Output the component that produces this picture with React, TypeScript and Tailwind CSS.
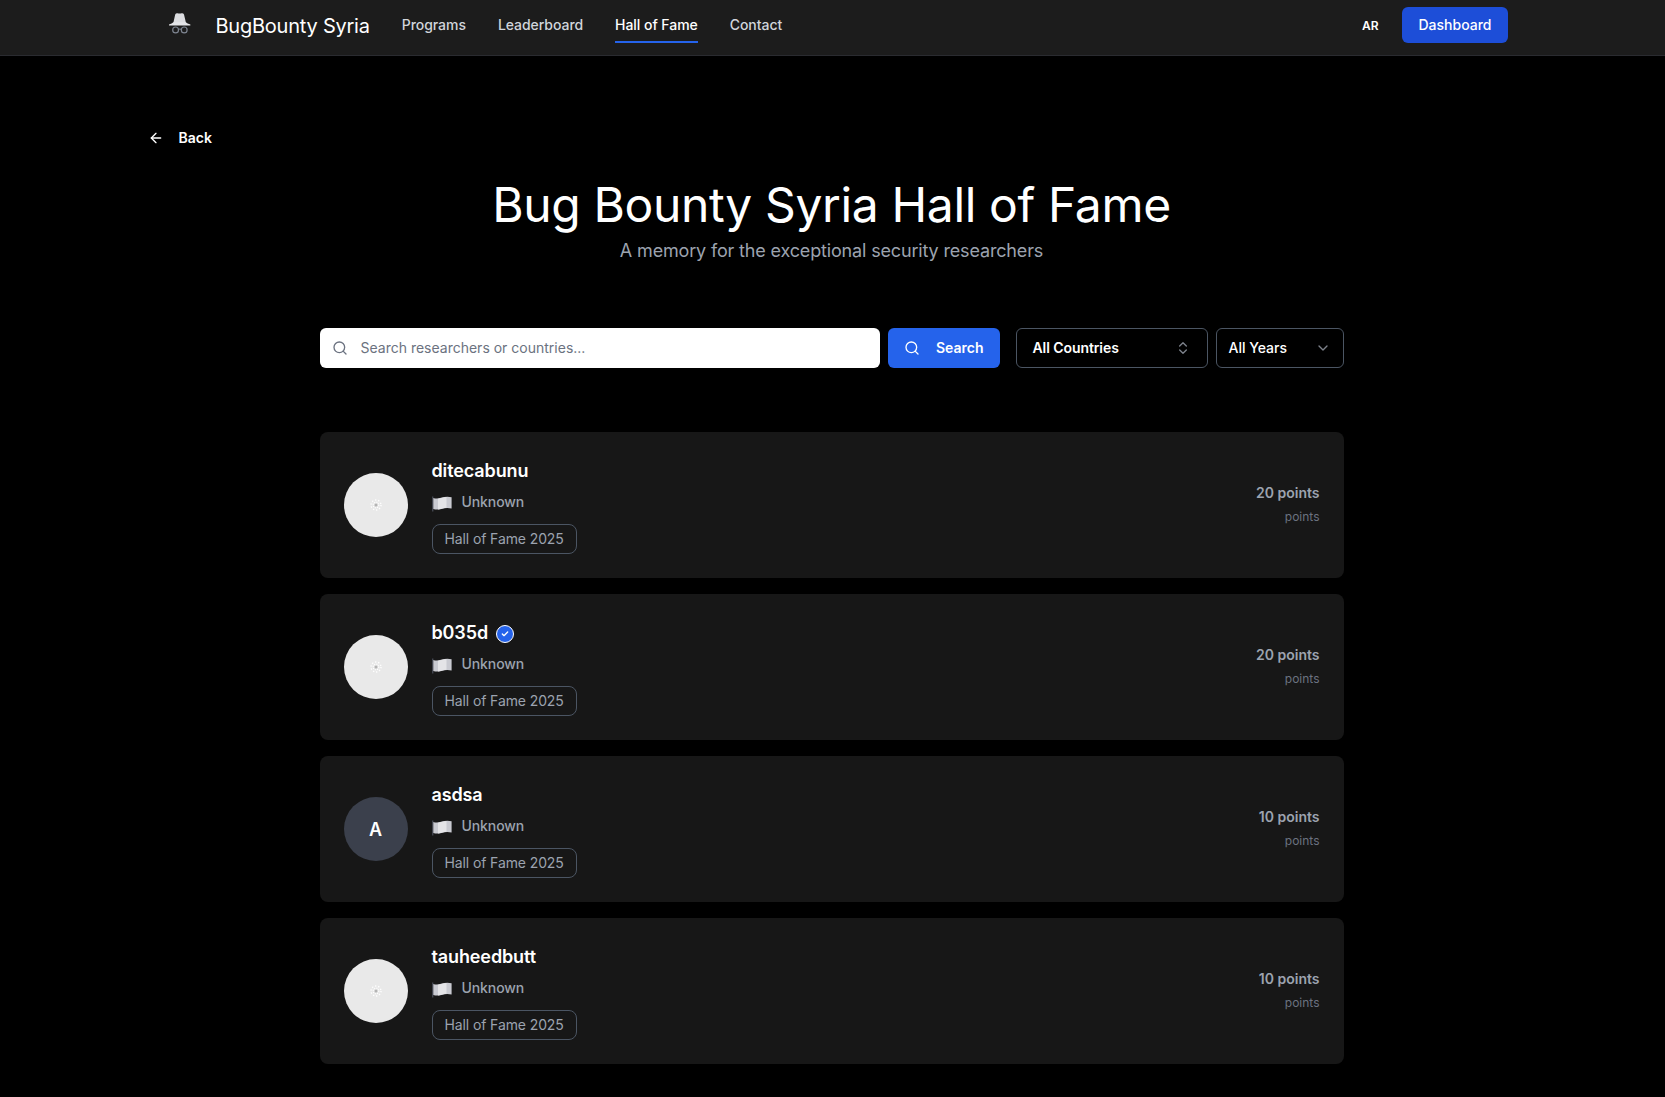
import React from 'react';
import { ArrowLeft, Check, ChevronDown, ChevronsUpDown, Search } from 'lucide-react';

interface Researcher {
  name: string;
  country: string;
  points: number;
  badge: string;
  verified?: boolean;
  initial?: string;
}

const NAV_ITEMS = ['Programs', 'Leaderboard', 'Hall of Fame', 'Contact'];

const RESEARCHERS: Researcher[] = [
  { name: 'ditecabunu', country: 'Unknown', points: 20, badge: 'Hall of Fame 2025' },
  { name: 'b035d', country: 'Unknown', points: 20, badge: 'Hall of Fame 2025', verified: true },
  { name: 'asdsa', country: 'Unknown', points: 10, badge: 'Hall of Fame 2025', initial: 'A' },
  { name: 'tauheedbutt', country: 'Unknown', points: 10, badge: 'Hall of Fame 2025' },
];

const Logo = () => (
  <svg viewBox="0 0 48 48" className="w-12 h-12 -mt-0.5 shrink-0" fill="none">
    <path d="M17.3 23 L19.2 14.6 Q19.8 13 21.5 13.2 Q23.6 14 25.7 13.2 Q27.4 13 28 14.6 L30 23 Z" fill="#dcdde0" />
    <path d="M13 24.4 Q16 23.6 17.4 22.2 H29.8 Q31.2 23.6 34.4 24.4 Q34.8 25.6 33.4 25.6 H14 Q12.6 25.6 13 24.4 Z" fill="#e4e5e8" />
    <circle cx="19.6" cy="29.9" r="2.9" stroke="#7d8490" strokeWidth="1.2" />
    <circle cx="28.2" cy="29.9" r="2.9" stroke="#7d8490" strokeWidth="1.2" />
    <path d="M22.5 29.4 Q23.9 28.6 25.3 29.4" stroke="#7d8490" />
  </svg>
);

const WhiteFlag = () => (
  <svg viewBox="0 0 20 16" className="w-5 h-4 mt-1 shrink-0">
    <path d="M0.3 0.6 h1 v15 h-1 Z" fill="#565b68" />
    <path d="M1.3 2 Q5 3.2 9 1.8 Q14 0.2 19.6 1.2 V12.4 Q14 11.4 9.5 12.9 Q5 14.2 1.3 13 Z" fill="#c9cad1" />
    <path d="M6 2.7 Q10 1.6 14.5 1 V11.7 Q10 12.4 6 13.6 Z" fill="#e4e4e7" />
  </svg>
);

const Avatar: React.FC<{ initial?: string }> = ({ initial }) => {
  if (initial) {
    return (
      <div className="w-16 h-16 pt-0.5 rounded-full bg-[#3b404c] flex items-center justify-center text-lg font-semibold text-white shrink-0">
        {initial}
      </div>
    );
  }
  return (
    <div className="w-16 h-16 rounded-full bg-[#e9e9e9] flex items-center justify-center shrink-0">
      <svg viewBox="0 0 12 12" className="w-3 h-3" fill="none">
        <circle cx="6" cy="6" r="5" stroke="#ffffff" strokeWidth="1.3" strokeDasharray="1.3 1.84" />
        <circle cx="6" cy="6" r="2.8" stroke="#ffffff" strokeWidth="1.2" strokeDasharray="1.1 1.1" />
        <circle cx="6" cy="6" r="1.5" fill="#b4b4b4" />
      </svg>
    </div>
  );
};

const ResearcherCard: React.FC<{ researcher: Researcher }> = ({ researcher }) => (
  <div className="h-[146px] rounded-lg bg-[#171717] px-6 flex items-center gap-6">
    <Avatar initial={researcher.initial} />
    <div className="flex-1 min-w-0">
      <div className="flex items-center gap-2 h-7 pt-0.5">
        <h3 className="text-lg font-semibold tracking-[-0.12px] text-white">{researcher.name}</h3>
        {researcher.verified && (
          <span className="w-[18px] h-[18px] mt-0.5 rounded-full border border-white bg-[#2563eb] flex items-center justify-center">
            <Check className="w-2 h-2 text-white" strokeWidth={4} />
          </span>
        )}
      </div>
      <div className="flex items-center gap-2.5 mt-2 mb-3 h-5">
        <WhiteFlag />
        <span className="text-sm font-medium tracking-[-0.1px] text-[#9ca3af]">{researcher.country}</span>
      </div>
      <span className="flex w-fit h-[30px] items-center rounded-lg border border-[#4b5563] px-3 text-sm tracking-[-0.11px] text-[#9ca3af]">
        {researcher.badge}
      </span>
    </div>
    <div className="text-right pb-0.5">
      <div className="text-sm font-semibold text-[#9ca3af]">{researcher.points} points</div>
      <div className="text-xs text-[#6b7280] mt-1.5">points</div>
    </div>
  </div>
);

const Header = () => (
  <header className="h-14 pr-0.5 bg-[#1c1c1c] border-b border-[#2a2b30]">
    <div className="max-w-[1400px] h-[50px] mx-auto px-6 flex items-center">
      <div className="flex items-center gap-3">
        <Logo />
        <span className="text-xl pt-0.5 tracking-[-0.23px] text-white">BugBounty Syria</span>
      </div>
      <nav className="flex items-center gap-8 ml-8">
        {NAV_ITEMS.map((item) => {
          const isActive = item === 'Hall of Fame';
          return (
            <a
              key={item}
              href="#"
              className={`text-sm font-medium tracking-[-0.05px] pt-2 pb-1.5 border-b-2 ${
                isActive ? 'text-white border-[#2563eb]' : 'text-[#d1d5db] border-transparent'
              }`}
            >
              {item}
            </a>
          );
        })}
      </nav>
      <div className="flex items-center gap-6 ml-auto">
        <button className="pt-0.5 text-xs font-semibold text-white">AR</button>
        <button className="h-9 px-4 rounded-md bg-[#1d4ed8] text-sm font-medium text-white">Dashboard</button>
      </div>
    </div>
  </header>
);

export default function App() {
  return (
    <div className="h-[1097px] overflow-hidden bg-black font-['Inter',sans-serif] text-white">
      <Header />

      <div className="pr-0.5">
        <main className="max-w-[1400px] mx-auto pt-16">
          <button className="h-9 px-4 flex items-center gap-[15px] text-sm font-semibold">
            <ArrowLeft className="w-4 h-4" />
            Back
          </button>

          <div className="text-center mt-[25px]">
            <h1 className="text-5xl leading-none font-normal tracking-[-0.36px]">Bug Bounty Syria Hall of Fame</h1>
            <p className="text-lg text-[#9ca3af] mt-2 tracking-[-0.16px]">A memory for the exceptional security researchers</p>
          </div>

          <div className="max-w-5xl mx-auto">
            <div className="flex mt-[63px]">
              <div className="flex-1 h-10 rounded-md bg-white flex items-center gap-[13px] px-3">
                <Search className="w-4 h-4 text-[#6b7280]" />
                <span className="text-sm text-[#6b7280]">Search researchers or countries...</span>
              </div>
              <button className="ml-2 w-28 h-10 px-4 rounded-md bg-[#2563eb] flex items-center justify-between text-sm font-semibold">
                <Search className="w-4 h-4" />
                Search
              </button>
              <button className="ml-4 w-48 h-10 px-4 rounded-md border border-[#4b5563] flex items-center justify-between text-sm font-semibold tracking-[-0.08px]">
                All Countries
                <ChevronsUpDown className="w-4 h-4 text-[#7d828b]" />
              </button>
              <button className="ml-2 w-32 h-10 px-3 rounded-md border border-[#4b5563] flex items-center justify-between text-sm font-medium">
                All Years
                <ChevronDown className="w-4 h-4 text-[#7d828b]" />
              </button>
            </div>

            <div className="mt-16 space-y-4">
              {RESEARCHERS.map((r) => (
                <ResearcherCard key={r.name} researcher={r} />
              ))}
            </div>
          </div>
        </main>
      </div>
    </div>
  );
}
